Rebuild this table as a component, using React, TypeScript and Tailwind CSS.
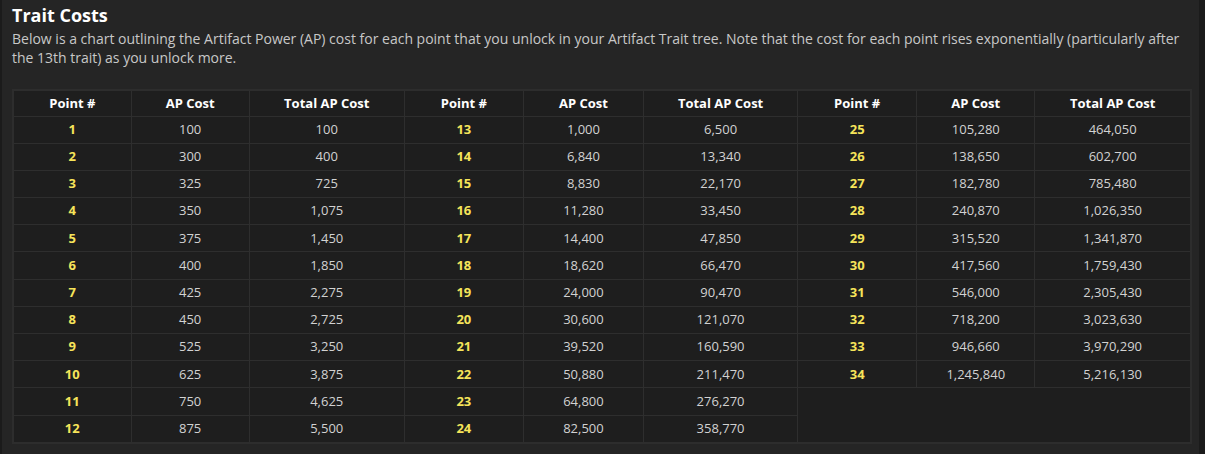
const groups: [string, string, string][][] = [
  [
    ["1", "100", "100"],
    ["2", "300", "400"],
    ["3", "325", "725"],
    ["4", "350", "1,075"],
    ["5", "375", "1,450"],
    ["6", "400", "1,850"],
    ["7", "425", "2,275"],
    ["8", "450", "2,725"],
    ["9", "525", "3,250"],
    ["10", "625", "3,875"],
    ["11", "750", "4,625"],
    ["12", "875", "5,500"],
  ],
  [
    ["13", "1,000", "6,500"],
    ["14", "6,840", "13,340"],
    ["15", "8,830", "22,170"],
    ["16", "11,280", "33,450"],
    ["17", "14,400", "47,850"],
    ["18", "18,620", "66,470"],
    ["19", "24,000", "90,470"],
    ["20", "30,600", "121,070"],
    ["21", "39,520", "160,590"],
    ["22", "50,880", "211,470"],
    ["23", "64,800", "276,270"],
    ["24", "82,500", "358,770"],
  ],
  [
    ["25", "105,280", "464,050"],
    ["26", "138,650", "602,700"],
    ["27", "182,780", "785,480"],
    ["28", "240,870", "1,026,350"],
    ["29", "315,520", "1,341,870"],
    ["30", "417,560", "1,759,430"],
    ["31", "546,000", "2,305,430"],
    ["32", "718,200", "3,023,630"],
    ["33", "946,660", "3,970,290"],
    ["34", "1,245,840", "5,216,130"],
  ],
];

const widths = ["w-[117px]", "w-[118px]", "w-[155px]", "w-[119px]", "w-[120px]", "w-[154px]", "w-[119px]", "w-[118px]", "w-[155px]"];

const cell = "border border-[#2e2e2e] text-center p-0";

function Row({ i }: { i: number }) {
  return (
    <tr className="h-[27.2px]">
      {groups.map((g, gi) => {
        const r = g[i];
        if (!r) {
          if (i === 10) return <td key={gi} className={cell} colSpan={3} rowSpan={2} />;
          return null;
        }
        return [
          <td key={gi + "a"} className={cell + " font-bold text-[#f6e45a]"}>{r[0]}</td>,
          <td key={gi + "b"} className={cell + " text-[#d2d2d2]"}>{r[1]}</td>,
          <td key={gi + "c"} className={cell + " text-[#d2d2d2]"}>{r[2]}</td>,
        ];
      })}
    </tr>
  );
}

export default function App() {
  return (
    <div className="flex h-[454px] w-[1205px] bg-[#1b1b1b] font-['Open_Sans',sans-serif]">
      <div className="w-[2px]" />
      <div className="flex-1 bg-[#252525] pl-[10px] pr-[7px]">
        <h2 className="pt-[3px] text-[18px] font-bold leading-[24px] text-white">Trait Costs</h2>
        <p className="mt-[2px] text-[14px] leading-[19px] text-[#c8c8c8]">
          Below is a chart outlining the Artifact Power (AP) cost for each point that you unlock in your Artifact Trait
          tree. Note that the cost for each point rises exponentially (particularly after the 13th trait) as you unlock
          more.
        </p>
        <div className="mt-[22px] border-2 border-[#2d2d2d] bg-[#1e1e1e]">
          <table className="w-full table-fixed border-collapse border-hidden text-[13px]">
            <colgroup>
              {widths.map((w, i) => (
                <col key={i} className={w} />
              ))}
            </colgroup>
            <thead>
              <tr className="h-[25px]">
                {[0, 1, 2].map((g) => [
                  <th key={g + "a"} className={cell + " font-bold text-white"}>Point #</th>,
                  <th key={g + "b"} className={cell + " font-bold text-white"}>AP Cost</th>,
                  <th key={g + "c"} className={cell + " font-bold text-white"}>Total AP Cost</th>,
                ])}
              </tr>
            </thead>
            <tbody>
              {Array.from({ length: 12 }, (_, i) => (
                <Row key={i} i={i} />
              ))}
            </tbody>
          </table>
        </div>
      </div>
      <div className="w-[6px]" />
    </div>
  );
}
